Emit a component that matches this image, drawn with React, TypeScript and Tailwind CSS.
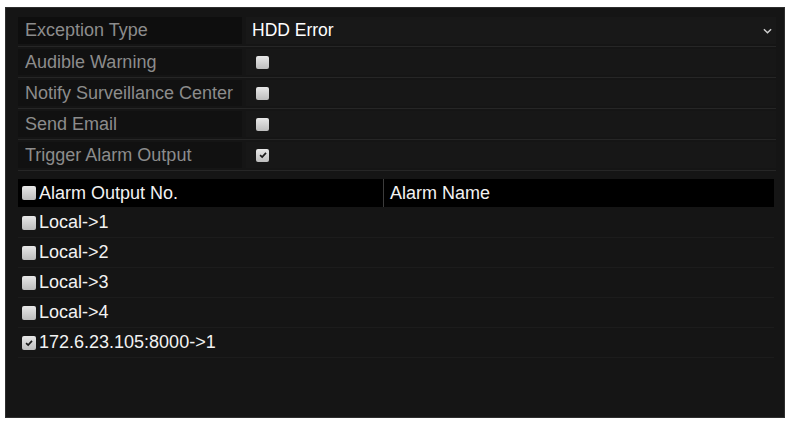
import React from "react";

const font = { fontFamily: '"Liberation Sans", Arial, sans-serif' };

function Box({ checked, size = "sm" }: { checked?: boolean; size?: "sm" | "lg" }) {
  return (
    <div
      className={
        (size === "lg" ? "w-[14px] h-[14px]" : "w-[13px] h-[13px]") +
        " shrink-0 rounded-[2px] bg-gradient-to-b from-[#e8e8e8] to-[#bdbdbd] flex items-center justify-center"
      }
    >
      {checked && (
        <svg viewBox="0 0 12 12" className="w-[10px] h-[10px]">
          <path d="M2.5 6.2 L5 8.6 L9.6 3.4" fill="none" stroke="#1a1a1a" strokeWidth="2" />
        </svg>
      )}
    </div>
  );
}

const options = [
  { label: "Audible Warning", checked: false },
  { label: "Notify Surveillance Center", checked: false },
  { label: "Send Email", checked: false },
  { label: "Trigger Alarm Output", checked: true },
];

const outputs = [
  { name: "Local->1", checked: false },
  { name: "Local->2", checked: false },
  { name: "Local->3", checked: false },
  { name: "Local->4", checked: false },
  { name: "172.6.23.105:8000->1", checked: true },
];

export default function App() {
  return (
    <div className="w-[790px] h-[423px] bg-white pt-[7px] pb-[5px] px-[5px]" style={font}>
      <div className="h-full bg-[#151515] border border-[#2e2e2e] pl-[12px] pr-[8px] pt-[7px] flex flex-col">
        {/* settings */}
        <div className="flex h-[32px] border-b border-[#262626] py-[2px]">
          <div className="w-[224px] bg-[#0e0e0e] flex items-center pl-[7px] text-[18px] text-[#8c8c8c]">
            Exception Type
          </div>
          <div className="flex-1 ml-[4px] bg-[#181818] flex items-center justify-between pl-[6px] pr-[4px] text-[17.5px] text-white">
            <span>HDD Error</span>
            <svg viewBox="0 0 10 6" className="w-[9px] h-[6px]">
              <path d="M1 1 L5 5 L9 1" fill="none" stroke="#cfcfcf" strokeWidth="1.6" />
            </svg>
          </div>
        </div>
        {options.map((o) => (
          <div key={o.label} className="flex h-[31px] border-b border-[#262626] py-[2px]">
            <div className="w-[224px] bg-[#111111] flex items-center pl-[7px] text-[18px] text-[#8c8c8c]">
              {o.label}
            </div>
            <div className="flex-1 ml-[4px] bg-[#171717] flex items-center pl-[10px]">
              <Box checked={o.checked} />
            </div>
          </div>
        ))}

        {/* alarm output table */}
        <div className="mt-[8px] mr-[2px] flex flex-col text-[18px] text-[#f2f2f2]">
          <div className="flex h-[28px] bg-black items-center">
            <div className="w-[365px] flex items-center gap-[3px] pl-[4px] h-full">
              <Box size="lg" />
              <span>Alarm Output No.</span>
            </div>
            <div className="flex-1 h-full flex items-center border-l border-[#3c3c3c] pl-[6px]">Alarm Name</div>
          </div>
          <div className="pt-[1px]">
            {outputs.map((r) => (
              <div key={r.name} className="flex h-[30px] border-b border-[#1c1c1c]">
                <div className="w-[365px] flex items-center gap-[3px] pl-[4px]">
                  <Box size="lg" checked={r.checked} />
                  <span>{r.name}</span>
                </div>
                <div className="flex-1" />
              </div>
            ))}
          </div>
        </div>
      </div>
    </div>
  );
}
